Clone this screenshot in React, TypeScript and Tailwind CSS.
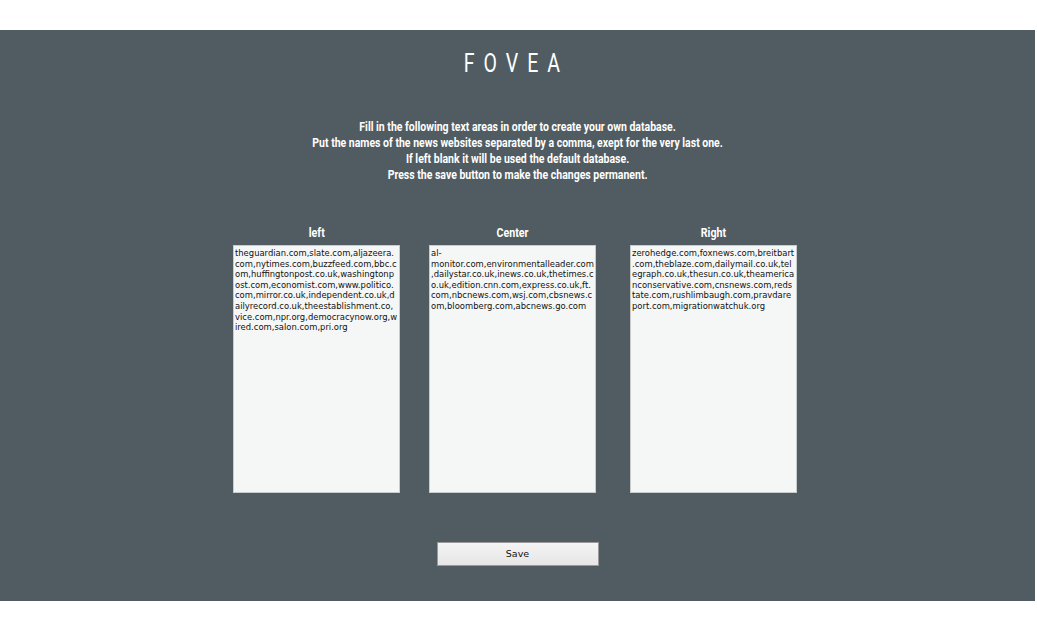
import React from "react";

const left =
  "theguardian.com,slate.com,aljazeera.com,nytimes.com,buzzfeed.com,bbc.com,huffingtonpost.co.uk,washingtonpost.com,economist.com,www.politico.com,mirror.co.uk,independent.co.uk,dailyrecord.co.uk,theestablishment.co,vice.com,npr.org,democracynow.org,wired.com,salon.com,pri.org";
const center =
  "al-monitor.com,environmentalleader.com,dailystar.co.uk,inews.co.uk,thetimes.co.uk,edition.cnn.com,express.co.uk,ft.com,nbcnews.com,wsj.com,cbsnews.com,bloomberg.com,abcnews.go.com";
const right =
  "zerohedge.com,foxnews.com,breitbart.com,theblaze.com,dailymail.co.uk,telegraph.co.uk,thesun.co.uk,theamericanconservative.com,cnsnews.com,redstate.com,rushlimbaugh.com,pravdareport.com,migrationwatchuk.org";

function Col({ label, value }: { label: string; value: string }) {
  return (
    <div className="flex flex-col items-center">
      <div className="text-[13px] leading-[16px] font-bold text-white mb-[4px] scale-x-[0.82] [font-family:'Roboto',sans-serif]">
        {label}
      </div>
      <textarea
        readOnly
        defaultValue={value}
        className="w-[167px] h-[248px] resize-none bg-[#f5f7f6] border border-[#c9cccc] px-[1px] py-[2px] text-[8.42px] leading-[10.6px] text-[#111] outline-none [font-family:'DejaVu_Sans',sans-serif]"
      />
    </div>
  );
}

export default function App() {
  return (
    <div className="w-[1037px] h-[630px] bg-white pt-[30px]">
      <div className="w-[1035px] h-[571px] bg-[#505c62] flex flex-col items-center">
        <h1 className="mt-[20px] pr-[2px] text-[26px] leading-[26px] text-white tracking-[12px] font-normal scale-x-[0.75] [font-family:'Roboto',sans-serif]">
          FOVEA
        </h1>
        <div className="mt-[43px] text-center text-white text-[12px] leading-[16px] font-bold scale-x-[0.875] [font-family:'Roboto',sans-serif]">
          <p>Fill in the following text areas in order to create your own database.</p>
          <p>Put the names of the news websites separated by a comma, exept for the very last one.</p>
          <p>If left blank it will be used the default database.</p>
          <p>Press the save button to make the changes permanent.</p>
        </div>
        <div className="mt-[42px] flex pr-[5px]">
          <Col label="left" value={left} />
          <div className="w-[29px]" />
          <Col label="Center" value={center} />
          <div className="w-[34px]" />
          <Col label="Right" value={right} />
        </div>
        <button className="mt-[49px] w-[162px] h-[24px] border border-[#9a9a9a] bg-gradient-to-b from-[#f4f4f4] to-[#e6e6e6] text-[9.5px] text-[#111] [font-family:'DejaVu_Sans',sans-serif]">
          Save
        </button>
      </div>
    </div>
  );
}
